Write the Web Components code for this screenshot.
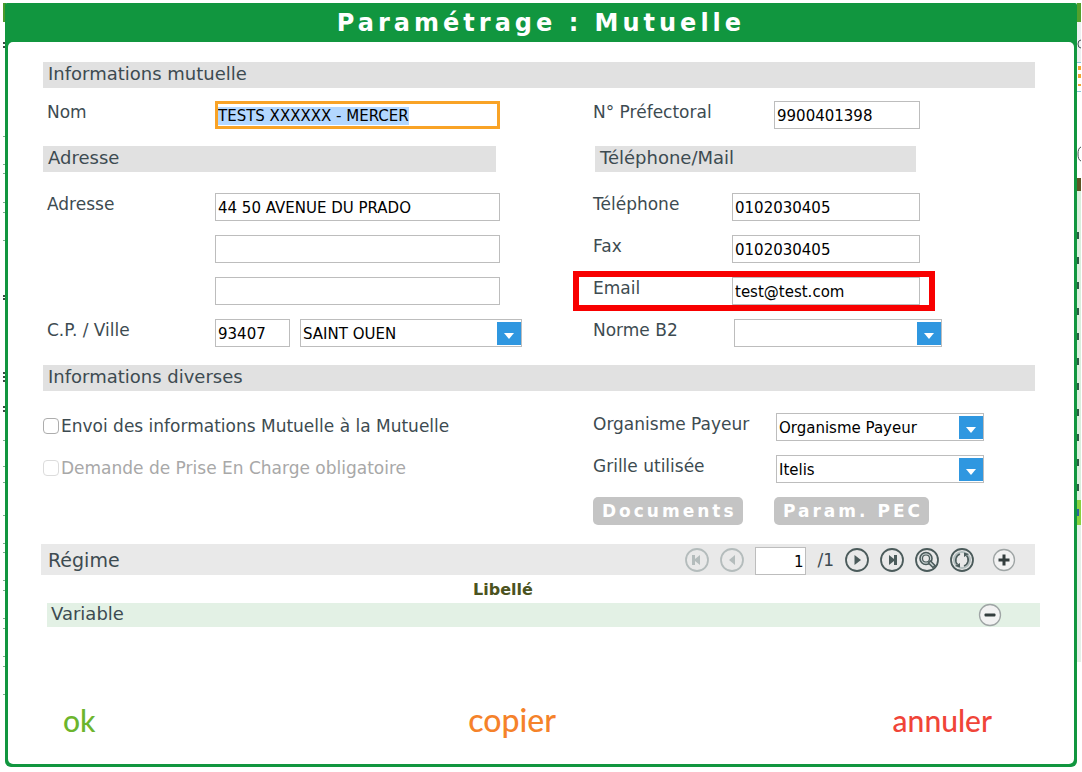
<!DOCTYPE html>
<html lang="fr">
<head>
<meta charset="utf-8">
<title>Paramétrage : Mutuelle</title>
<style>
  body {
    margin: 0;
    background: #fff;
    color: #3d4b51;
    font-family: "DejaVu Sans", Verdana, sans-serif;
    font-size: 17px;
  }
</style>
</head>
<body>
<mutuelle-screen></mutuelle-screen>

<script>
const BOX = /* css */ `
  input, select {
    box-sizing: border-box;
    width: 100%;
    height: 28px;
    margin: 0;
    padding: 2px 2px 0;
    border: 1px solid #bdbdbd;
    border-radius: 0;
    background: #fff;
    color: #000;
    font: 15px "DejaVu Sans", Verdana, sans-serif;
  }
`;

let uid = 0;

class TextField extends HTMLElement {
  constructor() {
    super();
    this.attachShadow({ mode: 'open' });
  }

  static get styles() {
    return /* css */ `
      :host {
        display: flex;
        align-items: flex-start;
      }
      label {
        flex: none;
        box-sizing: border-box;
        width: var(--label, 0);
        padding-left: var(--label-pad, 0);
        line-height: 22px;
        white-space: nowrap;
      }
      ${BOX}
      .box {
        flex: none;
        width: var(--box, 285px);
      }
      input:focus {
        padding: 2px 0 0;
        border: 3px solid #f9a326;
        outline: none;
      }
      input::selection {
        background: #b3d7ff;
        color: #000;
      }
    `;
  }

  connectedCallback() {
    const id = `f${uid++}`;
    const label = this.getAttribute('label');
    const name = this.getAttribute('name') || '';
    this.shadowRoot.innerHTML = /* html */ `
      <style>${TextField.styles}</style>
      ${label ? `<label for="${id}">${label}</label>` : ''}
      <div class="box">
        <input id="${id}" type="${this.getAttribute('type') || 'text'}"
          value="${this.getAttribute('value') || ''}" ${label ? '' : `aria-label="${name}"`}>
      </div>
    `;
  }

  select() {
    const input = this.shadowRoot.querySelector('input');
    input.focus();
    input.select();
  }
}

class ComboField extends HTMLElement {
  constructor() {
    super();
    this.attachShadow({ mode: 'open' });
  }

  static get styles() {
    return /* css */ `
      :host {
        display: flex;
        align-items: flex-start;
      }
      label {
        flex: none;
        width: var(--label, 0);
        line-height: 22px;
        white-space: nowrap;
      }
      ${BOX}
      .box {
        display: grid;
        flex: none;
        width: var(--box, 208px);
        margin-left: 2px;
      }
      select, svg {
        grid-area: 1 / 1;
      }
      select {
        appearance: none;
      }
      svg {
        justify-self: end;
        align-self: center;
        pointer-events: none;
      }
    `;
  }

  connectedCallback() {
    const id = `f${uid++}`;
    const label = this.getAttribute('label');
    const name = this.getAttribute('name') || '';
    this.shadowRoot.innerHTML = /* html */ `
      <style>${ComboField.styles}</style>
      ${label ? `<label for="${id}">${label}</label>` : ''}
      <div class="box">
        <select id="${id}" ${label ? '' : `aria-label="${name}"`}>
          <option>${this.getAttribute('value') || ''}</option>
        </select>
        <svg width="25" height="24" viewBox="0 0 25 24" aria-hidden="true">
          <path fill="#2f97e0" d="M0 1h24v23H0z"/>
          <path fill="#fff" d="M7 12h10l-5 6z"/>
        </svg>
      </div>
    `;
  }
}

class CheckField extends HTMLElement {
  constructor() {
    super();
    this.attachShadow({ mode: 'open' });
  }

  connectedCallback() {
    this.shadowRoot.innerHTML = /* html */ `
      <style>
        :host {
          display: block;
          height: 28px;
        }
        label {
          display: flex;
          align-items: center;
          gap: 2px;
          line-height: 26px;
          white-space: nowrap;
        }
        input {
          appearance: none;
          flex: none;
          box-sizing: border-box;
          width: 16px;
          height: 16px;
          margin: 0;
          border: 1px solid #adadad;
          border-radius: 4px;
          background: #fff;
        }
        :host([disabled]) {
          color: #a8a8a8;
        }
        input:disabled {
          border-color: #dcdcdc;
        }
      </style>
      <label>
        <input type="checkbox" ${this.hasAttribute('disabled') ? 'disabled' : ''}>
        <span><slot></slot></span>
      </label>
    `;
  }
}

class SectionBar extends HTMLElement {
  constructor() {
    super();
    this.attachShadow({ mode: 'open' });
  }

  connectedCallback() {
    this.shadowRoot.innerHTML = /* html */ `
      <style>
        :host {
          display: block;
          background: #e1e1e1;
        }
        h2 {
          margin: 0;
          padding: 0 5px 2px;
          font-size: 18px;
          font-weight: normal;
          line-height: 24px;
        }
      </style>
      <h2><slot></slot></h2>
    `;
  }
}

class ActionButton extends HTMLElement {
  constructor() {
    super();
    this.attachShadow({ mode: 'open' });
  }

  connectedCallback() {
    this.shadowRoot.innerHTML = /* html */ `
      <style>
        :host {
          display: block;
        }
        button {
          display: block;
          height: 28px;
          padding: 0 6px 1px 9px;
          border: 0;
          border-radius: 5px;
          background: #c4c4c4;
          color: #fff;
          font: bold 17px "DejaVu Sans", Verdana, sans-serif;
          letter-spacing: 3px;
          white-space: nowrap;
        }
      </style>
      <button type="button"><slot></slot></button>
    `;
  }
}

const ICONS = {
  first: '<path fill="currentColor" d="M7 7h3v4l5-4v10l-5-4v4H7z"/>',
  prev: '<path fill="currentColor" d="M15 7v10l-6-5z"/>',
  next: '<path fill="currentColor" d="M9.5 7v10l6.500-5z"/>',
  last: '<path fill="currentColor" d="M9 7l5 4V7h3v10h-3v-4l-5 4z"/>',
  search: `
    <circle cx="11" cy="10.500" r="6" fill="#c9d2d2" stroke="currentColor" stroke-width="1.6"/>
    <circle cx="11" cy="10.500" r="3.500" fill="#e9e9e9" stroke="currentColor" stroke-width="1.2"/>
    <path d="M14 13.500l5.500 5.500" stroke="currentColor" stroke-width="4.500"/>
    <path d="M15 14.500l3.500 3.500" stroke="#c9d2d2" stroke-width="1.4"/>`,
  refresh: `
    <circle cx="12" cy="12" r="8" fill="none" stroke="#b3bfbf" stroke-width="2"/>
    <path d="M7.500 16.500A6.500 6.500 0 0 1 10 6M16.500 7.500A6.500 6.500 0 0 1 14 18" fill="none" stroke="currentColor" stroke-width="1.6"/>
    <path fill="currentColor" d="M5 18l5-3v4.500zM19 6l-5 3V4.500z"/>`,
  plus: '<path fill="#333d3d" d="M10.500 6.500h3v4h4v3h-4v4h-3v-4h-4v-3h4z"/>',
  minus: '<rect x="6.500" y="10.500" width="11" height="3" rx="1" fill="#333d3d"/>'
};

class IconButton extends HTMLElement {
  constructor() {
    super();
    this.attachShadow({ mode: 'open' });
  }

  connectedCallback() {
    const icon = this.getAttribute('icon');
    const thin = icon === 'plus' || icon === 'minus';
    this.shadowRoot.innerHTML = /* html */ `
      <style>
        :host {
          display: block;
          color: #4b5b5b;
        }
        button {
          display: block;
          width: 24px;
          height: 24px;
          padding: 0;
          border: 0;
          background: none;
          color: inherit;
        }
        button:disabled {
          color: #b4bcbc;
        }
        svg {
          display: block;
        }
      </style>
      <button type="button" aria-label="${this.getAttribute('name')}" ${this.hasAttribute('disabled') ? 'disabled' : ''}>
        <svg width="24" height="24" viewBox="0 0 24 24">
          <circle cx="12" cy="12" r="${thin ? 10.5 : 11}" fill="${thin ? '#f2f2f2' : 'none'}"
            stroke="${thin ? '#9fa5a5' : 'currentColor'}" stroke-width="${thin ? 1.3 : 1.8}"/>
          ${ICONS[icon]}
        </svg>
      </button>
    `;
  }
}

class RegimeTable extends HTMLElement {
  constructor() {
    super();
    this.attachShadow({ mode: 'open' });
  }

  connectedCallback() {
    this.shadowRoot.innerHTML = /* html */ `
      <style>
        :host {
          display: block;
        }
        .bar {
          display: flex;
          align-items: center;
          height: 31px;
          margin-left: -2px;
          padding: 0 19px 0 7px;
          background: #e9e9e9;
        }
        h2 {
          flex: 1;
          margin: 0;
          font-size: 19px;
          font-weight: normal;
        }
        .pager {
          display: flex;
          align-items: center;
          gap: 11px;
          margin-right: 18px;
        }
        .pager input {
          box-sizing: border-box;
          width: 51px;
          height: 28px;
          margin: 3px 0 0;
          padding: 2px 2px 0;
          border: 1px solid #bdbdbd;
          background: #fff;
          color: #000;
          font: 15px "DejaVu Sans", Verdana, sans-serif;
          text-align: right;
        }
        table {
          width: calc(100% + 1px);
          margin: 0 -5px 0 4px;
          border-collapse: collapse;
        }
        th {
          height: 28px;
          padding: 2px 0 0;
          box-sizing: border-box;
          color: #4b5320;
          font-size: 16px;
          line-height: 26px;
        }
        td {
          height: 24px;
          padding: 0;
          background: #e3f1e5;
          font-size: 18px;
          line-height: 22px;
          vertical-align: top;
        }
        td:first-child {
          padding-left: 4px;
        }
        .tools {
          width: 62px;
          padding-left: 19px;
        }
      </style>
      <div class="bar">
        <h2>Régime</h2>
        <div class="pager">
          <icon-button icon="first" name="Premier" disabled></icon-button>
          <icon-button icon="prev" name="Précédent" disabled></icon-button>
          <input type="text" value="1" aria-label="Page">
          <span>/1</span>
          <icon-button icon="next" name="Suivant"></icon-button>
          <icon-button icon="last" name="Dernier"></icon-button>
          <icon-button icon="search" name="Rechercher"></icon-button>
          <icon-button icon="refresh" name="Actualiser"></icon-button>
        </div>
        <icon-button icon="plus" name="Ajouter"></icon-button>
      </div>
      <table>
        <thead><tr><th scope="col">Libellé</th><th class="tools"></th></tr></thead>
        <tbody>
          <tr><td>Variable</td><td class="tools"><icon-button icon="minus" name="Supprimer"></icon-button></td></tr>
        </tbody>
      </table>
    `;
  }
}

// slivers of the page underneath that show on both sides of the dialog
class PageBackdrop extends HTMLElement {
  constructor() {
    super();
    this.attachShadow({ mode: 'open' });
  }

  connectedCallback() {
    const left = [136, 164, 173, 202, 212, 240, 440, 466, 482, 515, 543, 552, 580, 590, 618, 628, 656, 666, 694];
    const dark = [42, 46, 295, 298, 372, 376, 380, 406, 410];
    const right = [235, 260, 285, 311, 336, 361, 386, 412, 437, 462, 487];
    this.shadowRoot.innerHTML = /* html */ `
      <style>
        :host {
          position: absolute;
          inset: 0;
          display: flex;
          justify-content: space-between;
          padding: 0 1px 0 3px;
          overflow: hidden;
          z-index: -1;
        }
        svg {
          flex: none;
        }
      </style>
      <svg width="3" height="772" aria-hidden="true">
        <path fill="#4a9a2c" d="M0 3h3v19H0z"/>
        ${left.map(y => `<path fill="#7fb08f" d="M0 ${y}h3v1H0z"/>`).join('')}
        ${dark.map(y => `<path fill="#3c4a44" d="M0 ${y}h3v2H0z"/>`).join('')}
      </svg>
      <svg width="4" height="772" aria-hidden="true">
        <path fill="#55a02c" d="M0 3h4v19H0z"/>
        <path fill="#edf0f1" d="M0 22h4v40H0z"/>
        <path fill="none" stroke="#444f53" d="M4 40q-3 0-3 4t3 4M4 147q-3 1-3 7t3 7"/>
        <path fill="#8cc3da" d="M0 62h4v1H0zM0 91h4v1H0z"/>
        <path fill="#f0a432" d="M1 66h3v4H1zM1 74h3v4H1zM1 84h3v2H1z"/>
        <path fill="#5d5424" d="M0 178h4v13H0z"/>
        <path fill="#d9efdd" d="M0 191h4v309H0z"/>
        ${right.map(y => `<path fill="#2c5a44" d="M0 ${y - 3}h2v7H0z"/>`).join('')}
        <path fill="#8bd13f" d="M0 500h4v25H0z"/>
        <path fill="#2a63a0" d="M0 509h2v7H0z"/>
        <path fill="#e4f0e8" d="M0 525h4v137H0z"/>
      </svg>
    `;
  }
}

class DialogFrame extends HTMLElement {
  constructor() {
    super();
    this.attachShadow({ mode: 'open' });
  }

  connectedCallback() {
    this.shadowRoot.innerHTML = /* html */ `
      <style>
        :host {
          display: flex;
          flex: 1;
          flex-direction: column;
          padding: 0 3px 3px;
          border-radius: 2px 2px 6px 6px;
          background: #11963f;
        }
        h1 {
          margin: 0;
          padding-top: 1px;
          color: #fff;
          font-size: 24px;
          line-height: 38px;
          letter-spacing: 4px;
          text-align: center;
        }
        .body {
          display: flex;
          flex: 1;
          flex-direction: column;
          padding: 20px 39px 24px 35px;
          border-radius: 5px;
          background: #fff;
        }
      </style>
      <h1><slot name="title"></slot></h1>
      <div class="body"><slot></slot></div>
    `;
  }
}

class MutuelleScreen extends HTMLElement {
  constructor() {
    super();
    this.attachShadow({ mode: 'open' });
  }

  static get styles() {
    return /* css */ `
      :host {
        position: relative;
        z-index: 0;
        display: flex;
        box-sizing: border-box;
        min-height: 100vh;
        padding: 3px 5px 5px;
      }
      .cols {
        display: grid;
        grid-template-columns: 550fr 442fr;
      }
      .stack {
        display: flex;
        flex-direction: column;
        gap: 14px;
      }
      .left {
        --label: 172px;
        --label-pad: 4px;
      }
      .contact {
        --label: 139px;
        --box: 188px;
      }
      .contact combo-field {
        --box: 208px;
      }
      .wide {
        --label: 181px;
      }
      .wide text-field {
        --box: 146px;
      }
      .name {
        margin: 13px 0 17px;
      }
      .heads section-bar {
        margin-right: 97px;
      }
      .heads section-bar + section-bar {
        margin: 0 119px 0 2px;
      }
      .coords {
        margin: 21px 0 18px;
      }
      .line {
        margin-left: 172px;
        --label-pad: 0;
      }
      .city {
        display: flex;
        gap: 8px;
      }
      .city text-field {
        --box: 75px;
      }
      .city combo-field {
        --box: 222px;
      }
      .mark {
        position: relative;
      }
      .mark::after {
        content: "";
        position: absolute;
        inset: -6px auto -6px -20px;
        box-sizing: border-box;
        width: 362px;
        border: 6px solid #f80000;
        pointer-events: none;
      }
      .misc {
        margin: 22px 0 19px;
      }
      .buttons {
        display: grid;
        grid-template-columns: 181px auto;
        justify-content: start;
      }
      footer {
        display: grid;
        grid-template-columns: 406fr 425fr auto;
        margin-top: auto;
        padding: 0 43px 2px 20px;
      }
      footer button {
        justify-self: start;
        padding: 0;
        border: 0;
        background: none;
        font: 500 30px Lato, sans-serif;
        line-height: 36px;
      }
      .ok { color: #6cb52d; }
      .copy {
        color: #f5822a;
        font-size: 32px;
      }
      .cancel { color: #f04438; }
    `;
  }

  connectedCallback() {
    this.render();
    this.shadowRoot.querySelector('#nom').select();
  }

  render() {
    this.shadowRoot.innerHTML = /* html */ `
      <style>${MutuelleScreen.styles}</style>
      <page-backdrop></page-backdrop>
      <dialog-frame>
        <span slot="title">Paramétrage : Mutuelle</span>

        <section-bar>Informations mutuelle</section-bar>
        <div class="cols name">
          <div class="left"><text-field id="nom" label="Nom" value="TESTS XXXXXX - MERCER"></text-field></div>
          <div class="wide"><text-field label="N° Préfectoral" value="9900401398"></text-field></div>
        </div>

        <div class="cols heads">
          <section-bar>Adresse</section-bar>
          <section-bar>Téléphone/Mail</section-bar>
        </div>
        <div class="cols coords">
          <div class="stack left">
            <text-field label="Adresse" value="44 50 AVENUE DU PRADO"></text-field>
            <text-field class="line" name="Adresse 2"></text-field>
            <text-field class="line" name="Adresse 3"></text-field>
            <div class="city">
              <text-field label="C.P. / Ville" value="93407"></text-field>
              <combo-field name="Ville" value="SAINT OUEN"></combo-field>
            </div>
          </div>
          <div class="stack contact">
            <text-field label="Téléphone" type="tel" value="0102030405"></text-field>
            <text-field label="Fax" type="tel" value="0102030405"></text-field>
            <text-field class="mark" label="Email" type="email" value="test@test.com"></text-field>
            <combo-field label="Norme B2"></combo-field>
          </div>
        </div>

        <section-bar>Informations diverses</section-bar>
        <div class="cols misc">
          <div class="stack">
            <check-field>Envoi des informations Mutuelle à la Mutuelle</check-field>
            <check-field disabled>Demande de Prise En Charge obligatoire</check-field>
          </div>
          <div class="stack wide">
            <combo-field label="Organisme Payeur" value="Organisme Payeur"></combo-field>
            <combo-field label="Grille utilisée" value="Itelis"></combo-field>
            <div class="buttons">
              <action-button>Documents</action-button>
              <action-button>Param. PEC</action-button>
            </div>
          </div>
        </div>

        <regime-table></regime-table>

        <footer>
          <button type="button" class="ok">ok</button>
          <button type="button" class="copy">copier</button>
          <button type="button" class="cancel">annuler</button>
        </footer>
      </dialog-frame>
    `;
  }
}

customElements.define('text-field', TextField);
customElements.define('combo-field', ComboField);
customElements.define('check-field', CheckField);
customElements.define('section-bar', SectionBar);
customElements.define('action-button', ActionButton);
customElements.define('icon-button', IconButton);
customElements.define('regime-table', RegimeTable);
customElements.define('page-backdrop', PageBackdrop);
customElements.define('dialog-frame', DialogFrame);
customElements.define('mutuelle-screen', MutuelleScreen);
</script>
</body>
</html>
